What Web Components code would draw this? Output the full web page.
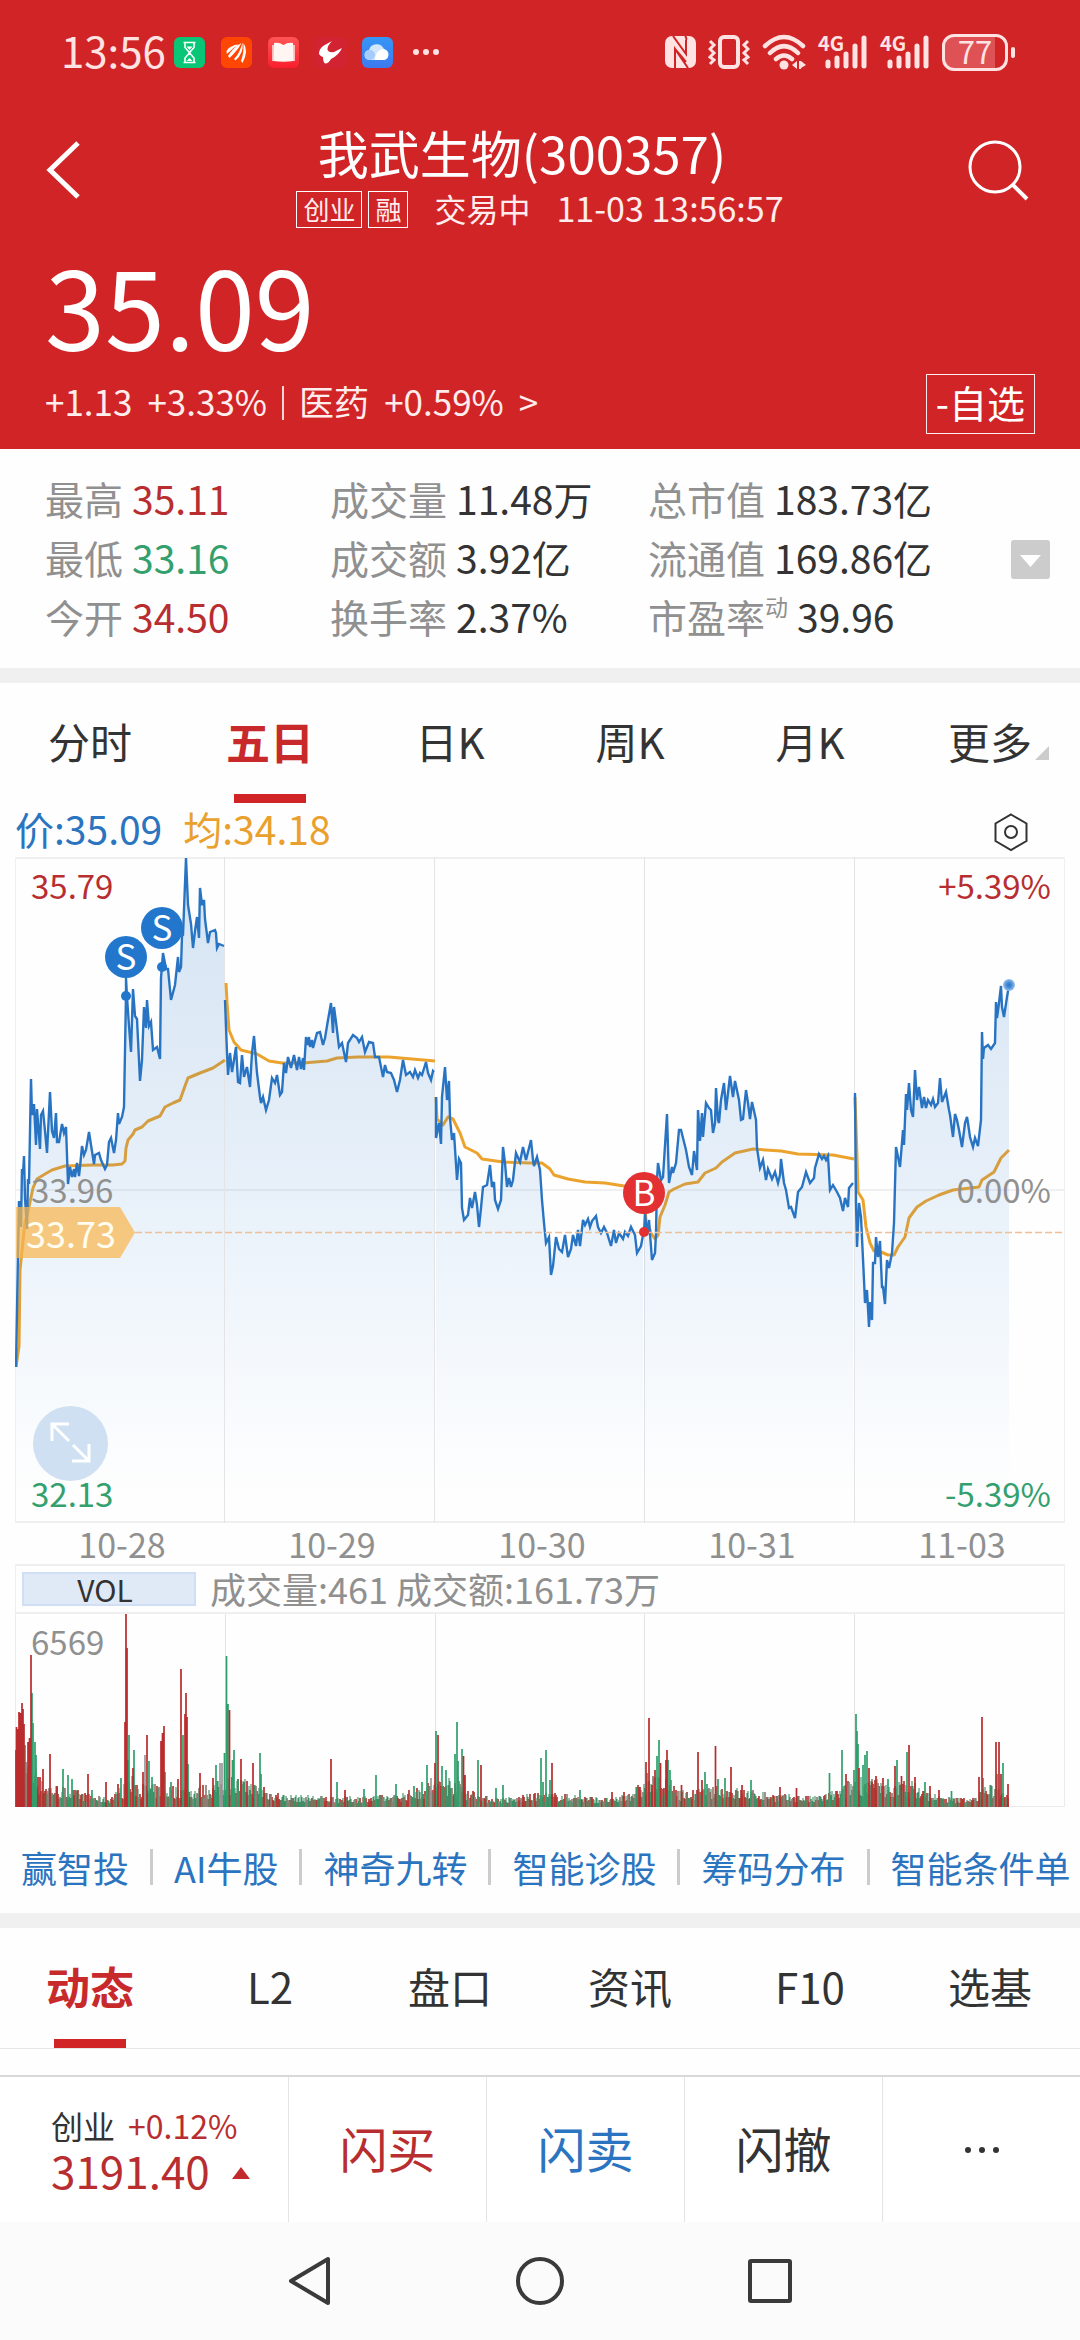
<!DOCTYPE html>
<html lang="zh-CN">
<head>
<meta charset="utf-8">
<meta name="viewport" content="width=device-width, initial-scale=1">
<title>我武生物(300357)</title>
<style>
    :root {
        --up: #b82e30;
        --down: #33a06e;
        --brand: #d12426;
        --blue: #2b74bf;
        --orange: #e9a02c;
        --ink: #333;
        --muted: #909090;
        --line: #efefef;
    }
    * { box-sizing: border-box; }
    body {
        margin: 0;
        min-height: 100vh;
        display: flex;
        flex-direction: column;
        background: #fefefe;
        color: var(--ink);
        font-family: "Noto Sans CJK SC", "Noto Sans", sans-serif;
    }
    header { background: var(--brand); color: #fff; }
    main { flex: 1; }
    .band { height: 15px; background: #f0f0f0; }
    .news-tabs { border-bottom: 1px solid #e6e6e6; }
</style>
</head>
<body>
<header>
    <status-bar time="13:56" battery="77"></status-bar>
    <stock-title name="我武生物(300357)">
        <title-tag>创业</title-tag>
        <title-tag>融</title-tag>
        <span slot="state">交易中</span>
        <time slot="time">11-03 13:56:57</time>
    </stock-title>
    <price-board price="35.09" change="+1.13" percent="+3.33%" sector="医药" sector-percent="+0.59%"></price-board>
</header>
<main>
    <quote-stats>
        <stat-item label="最高" tone="up">35.11</stat-item>
        <stat-item label="成交量">11.48万</stat-item>
        <stat-item label="总市值">183.73亿</stat-item>
        <stat-item label="最低" tone="down">33.16</stat-item>
        <stat-item label="成交额">3.92亿</stat-item>
        <stat-item label="流通值">169.86亿</stat-item>
        <stat-item label="今开" tone="up">34.50</stat-item>
        <stat-item label="换手率">2.37%</stat-item>
        <stat-item label="市盈率" mark="动">39.96</stat-item>
    </quote-stats>
    <div class="band"></div>
    <tab-strip>
        <tab-item>分时</tab-item>
        <tab-item active>五日</tab-item>
        <tab-item>日K</tab-item>
        <tab-item>周K</tab-item>
        <tab-item>月K</tab-item>
        <tab-item more>更多</tab-item>
    </tab-strip>
    <chart-legend price="35.09" average="34.18"></chart-legend>
    <price-chart high="35.79" middle="33.96" low="32.13" range="5.39%" cost="33.73">
        <trade-marker side="S" x="111" y="139"></trade-marker>
        <trade-marker side="S" x="147" y="110"></trade-marker>
        <trade-marker side="B" x="629" y="375"></trade-marker>
    </price-chart>
    <date-axis dates="10-28,10-29,10-30,10-31,11-03"></date-axis>
    <volume-chart peak="6569">成交量:461 成交额:161.73万</volume-chart>
    <tool-links>
        <a href="#invest">赢智投</a>
        <a href="#ai">AI牛股</a>
        <a href="#nine">神奇九转</a>
        <a href="#diagnose">智能诊股</a>
        <a href="#chips">筹码分布</a>
        <a href="#orders">智能条件单</a>
    </tool-links>
    <div class="band"></div>
    <tab-strip class="news-tabs">
        <tab-item active>动态</tab-item>
        <tab-item>L2</tab-item>
        <tab-item>盘口</tab-item>
        <tab-item>资讯</tab-item>
        <tab-item>F10</tab-item>
        <tab-item>选基</tab-item>
    </tab-strip>
</main>
<trade-bar index="创业" percent="+0.12%" value="3191.40"></trade-bar>
<system-nav></system-nav>

<script>
// shared reset for every shadow root
const base = `
    * { box-sizing: border-box; }
    button { font: inherit; color: inherit; background: none; border: 0; padding: 0; margin: 0; cursor: pointer; }
    svg { display: block; }
`;

class StatusBar extends HTMLElement {
    connectedCallback() {
        this.attachShadow({ mode: 'open' });
        const signal = `
            <div class="signal">
                <span>4G</span>
                <svg width="50" height="36" viewBox="0 0 50 36" fill="none" stroke="currentColor" stroke-width="5" stroke-linecap="round">
                    <path d="M10 28v4M19 24v8M28 20v12M37 12v20M46 4v28"/>
                </svg>
            </div>`;
        this.shadowRoot.innerHTML = `
            <style>
                ${base}
                :host {
                    display: flex;
                    align-items: center;
                    height: 104px;
                    padding: 0 72px 0 61px;
                    color: #ffe3e3;
                }
                .time { font-size: 42px; line-height: 54px; margin-right: 8px; padding-bottom: 4px; }
                .apps { display: flex; align-items: center; gap: 16px; flex: 1; }
                .system { display: flex; align-items: center; gap: 12px; }
                .signal { position: relative; }
                .signal span {
                    position: absolute;
                    left: 0;
                    top: -3px;
                    font-size: 20px;
                    font-weight: 700;
                    line-height: 24px;
                }
                .battery {
                    position: relative;
                    width: 66px;
                    height: 37px;
                    border: 3px solid currentColor;
                    border-radius: 12px;
                    background: linear-gradient(to right, #de5154 84%, transparent 84%);
                    font-size: 31px;
                    line-height: 27px;
                    text-align: center;
                }
                .battery::after {
                    content: "";
                    position: absolute;
                    right: -10px;
                    top: 10px;
                    width: 4px;
                    height: 11px;
                    border-radius: 2px;
                    background: currentColor;
                }
            </style>
            <span class="time">${this.getAttribute('time')}</span>
            <div class="apps">
                <svg width="31" height="31" viewBox="0 0 31 31" fill="none" stroke="#fff" stroke-width="1.6">
                    <rect width="31" height="31" rx="6" fill="#08c676" stroke="none"/>
                    <path d="M9.5 5.5h12M9.5 25.5h12M11 6v4.5l4 4.5v1.5l-4 4.5v4.5M20 6v4.5l-4 4.5v1.5l4 4.5v4.5"/>
                    <path d="M12.5 9.5h6l-3 3.5zM12.5 24l3-3 3 3z" fill="#fff" stroke="none"/>
                </svg>
                <svg width="31" height="31" viewBox="0 0 31 31" fill="#fff">
                    <rect width="31" height="31" rx="6" fill="#ff4703"/>
                    <path d="M5.5 14Q9 8 18 7.5Q12 10.5 5.8 17z"/>
                    <path d="M7 19Q12 10.5 20.5 6Q17 13 8.5 21z"/>
                    <path d="M13 22Q19 16 21.5 5.5Q23 16 14.5 23.5z"/>
                    <path d="M20 24Q23 16 22.5 6Q28 14 21.5 26z"/>
                </svg>
                <svg width="31" height="31" viewBox="0 0 31 31">
                    <linearGradient id="book" x2="0" y2="1"><stop stop-color="#ff5556"/><stop offset="1" stop-color="#f91f2d"/></linearGradient>
                    <rect width="31" height="31" rx="6" fill="url(#book)"/>
                    <path d="M4 8h23v16H4z" fill="#ffb9b7"/>
                    <path d="M6 6q5-1 9.5 2Q20 5 25 6l.5 18q-10 1.5-20 0z" fill="#fff6f4"/>
                </svg>
                <svg width="31" height="31" viewBox="0 0 31 31">
                    <rect width="31" height="31" rx="6" fill="#d12332"/>
                    <path d="M17 4L8 9Q4 12 4 17Q6 20 8 20Q8 25 10 26.5Q13 27 16 22Q24 18 27 11L19 15Q14 16 12.5 13Q12 9 17 4z" fill="#fff"/>
                </svg>
                <svg width="31" height="31" viewBox="0 0 31 31">
                    <linearGradient id="sky" x2="0" y2="1"><stop stop-color="#3597f6"/><stop offset="1" stop-color="#3d79ef"/></linearGradient>
                    <rect width="31" height="31" rx="6" fill="url(#sky)"/>
                    <path d="M8 23a5 5 0 0 1-1-10a8 8 0 0 1 15-1a6 6 0 0 1 0 11z" fill="#d2e6fc"/>
                    <path d="M13 23Q13 16 18 13Q21 11 24 13a5.5 5.5 0 0 1-2 10z" fill="#fff"/>
                    <circle cx="8" cy="18" r="5" fill="#a5ccfa"/>
                </svg>
                <svg width="36" height="31" viewBox="0 0 36 31" fill="currentColor">
                    <circle cx="7" cy="15" r="3"/><circle cx="17" cy="15" r="3"/><circle cx="27" cy="15" r="3"/>
                </svg>
            </div>
            <div class="system">
                <svg width="31" height="32" viewBox="0 0 31 32">
                    <rect width="31" height="32" rx="7" fill="currentColor"/>
                    <path d="M8 0L21 18V4M21 4Q22 2 20 0M10 32V13L23 32M10 13L21 26" fill="none" stroke="#d12426" stroke-width="2"/>
                </svg>
                <svg width="42" height="34" viewBox="0 0 42 34" fill="none" stroke="currentColor" stroke-width="3">
                    <rect x="12" y="2" width="18" height="30" rx="4" stroke-width="4"/>
                    <path d="M2 6l4 4-4 4 4 4-4 4 4 3-4 4M40 6l-4 4 4 4-4 4 4 4-4 3 4 4"/>
                </svg>
                <svg width="44" height="36" viewBox="0 0 44 36" fill="none" stroke="currentColor" stroke-width="4.5" stroke-linecap="round">
                    <path d="M3 12Q22-6 41 12M8 19Q22 5 36 19M14 25Q22 18 30 25"/>
                    <circle cx="22" cy="31" r="4.5" fill="currentColor" stroke="none"/>
                    <path d="M30 31l5-4v8zM37 27h2v8h-2zM39 27l5 4-5 3z" fill="currentColor" stroke="none"/>
                </svg>
                ${signal}
                ${signal}
                <div class="battery">${this.getAttribute('battery')}</div>
            </div>
        `;
    }
}

class StockTitle extends HTMLElement {
    connectedCallback() {
        this.attachShadow({ mode: 'open' });
        this.shadowRoot.innerHTML = `
            <style>
                ${base}
                :host {
                    display: grid;
                    grid-template-columns: 120px 1fr 120px;
                    padding-top: 18px;
                }
                h1 {
                    margin: 0;
                    padding-right: 36px;
                    font-size: 51px;
                    font-weight: 400;
                    line-height: 60px;
                    text-align: center;
                    white-space: nowrap;
                }
                .sub {
                    display: flex;
                    justify-content: center;
                    gap: 6px;
                    margin-top: 9px;
                    height: 37px;
                    line-height: 34px;
                    white-space: nowrap;
                    color: #ffecec;
                }
                ::slotted(span) { font-size: 32px; margin: 0 20px; }
                ::slotted(time) { font-size: 34px; }
                .back, .search { align-self: start; height: 96px; }
                .back svg { margin-left: 42px; }
                .search svg { margin-left: 4px; }
            </style>
            <button class="back" aria-label="返回">
                <svg width="42" height="60" viewBox="0 0 42 60" fill="none" stroke="#fff" stroke-width="5"><path d="M36 3L8 30l28 27"/></svg>
            </button>
            <div>
                <h1>${this.getAttribute('name')}</h1>
                <div class="sub"><slot></slot><slot name="state"></slot><slot name="time"></slot></div>
            </div>
            <button class="search" aria-label="搜索">
                <svg width="68" height="64" viewBox="0 0 68 64" fill="none" stroke="#fff" stroke-width="3">
                    <circle cx="31" cy="29" r="25"/><path d="M48 46l15 15" stroke-width="4"/>
                </svg>
            </button>
        `;
    }
}

class TitleTag extends HTMLElement {
    connectedCallback() {
        this.attachShadow({ mode: 'open' });
        this.shadowRoot.innerHTML = `
            <style>
                :host {
                    display: block;
                    padding: 0 6px;
                    border: 1px solid #fff;
                    font-size: 26px;
                    line-height: 34px;
                }
            </style>
            <slot></slot>
        `;
    }
}

class PriceBoard extends HTMLElement {
    connectedCallback() {
        this.attachShadow({ mode: 'open' });
        this.shadowRoot.innerHTML = `
            <style>
                ${base}
                :host { display: block; padding: 20px 45px 15px; }
                .price { font-size: 108px; line-height: 112px; }
                .row { display: flex; justify-content: space-between; margin-top: 14px; }
                .change {
                    display: flex;
                    align-items: center;
                    gap: 15px;
                    height: 54px;
                    font-size: 35px;
                    line-height: 54px;
                    white-space: nowrap;
                    color: #ffecec;
                }
                .change i { width: 2px; height: 34px; margin-top: 4px; background: #ffd5d5; }
                .change a { display: flex; gap: 15px; color: inherit; text-decoration: none; }
                .watch {
                    height: 60px;
                    padding: 0 9px 4px;
                    border: 1px solid #ffecec;
                    font-size: 38px;
                    line-height: 54px;
                    white-space: nowrap;
                }
            </style>
            <div class="price">${this.getAttribute('price')}</div>
            <div class="row">
                <div class="change">
                    <span>${this.getAttribute('change')}</span>
                    <span>${this.getAttribute('percent')}</span>
                    <i></i>
                    <a href="#sector">
                        <span>${this.getAttribute('sector')}</span>
                        <span>${this.getAttribute('sector-percent')}</span>
                        <span>&gt;</span>
                    </a>
                </div>
                <button class="watch">-自选</button>
            </div>
        `;
    }
}

class QuoteStats extends HTMLElement {
    connectedCallback() {
        this.attachShadow({ mode: 'open' });
        this.shadowRoot.innerHTML = `
            <style>
                ${base}
                :host {
                    display: grid;
                    grid-template-columns: 966fr 69fr;
                    align-items: center;
                    padding: 22px 0 20px 45px;
                }
                .items {
                    display: grid;
                    grid-template-columns: 285fr 318fr 363fr;
                    grid-auto-rows: 59px;
                }
                button { width: 39px; height: 39px; border-radius: 3px; background: #ccc; }
            </style>
            <div class="items"><slot></slot></div>
            <button aria-label="展开">
                <svg width="39" height="39" viewBox="0 0 39 39" fill="#fff"><path d="M9 15h21L19.5 27z"/></svg>
            </button>
        `;
    }
}

class StatItem extends HTMLElement {
    connectedCallback() {
        this.attachShadow({ mode: 'open' });
        const tone = this.getAttribute('tone');
        const mark = this.getAttribute('mark');
        this.shadowRoot.innerHTML = `
            <style>
                :host {
                    display: flex;
                    gap: 9px;
                    font-size: 39px;
                    line-height: 55px;
                    white-space: nowrap;
                }
                .label { display: flex; color: var(--muted); }
                small { font-size: 23px; line-height: 34px; }
                .value { color: ${tone ? `var(--${tone})` : 'var(--ink)'}; }
            </style>
            <span class="label">${this.getAttribute('label')}${mark ? `<small>${mark}</small>` : ''}</span>
            <span class="value"><slot></slot></span>
        `;
    }
}

class TabStrip extends HTMLElement {
    connectedCallback() {
        this.attachShadow({ mode: 'open' });
        this.shadowRoot.innerHTML = `
            <style>
                :host { display: flex; }
                ::slotted(*) { flex: 1; }
            </style>
            <slot></slot>
        `;
    }
}

class TabItem extends HTMLElement {
    connectedCallback() {
        this.attachShadow({ mode: 'open' });
        this.shadowRoot.innerHTML = `
            <style>
                ${base}
                :host { display: block; }
                button {
                    width: 100%;
                    height: 120px;
                    padding-bottom: 4px;
                    font-size: 42px;
                    line-height: 60px;
                }
                :host([active]) button {
                    color: #c82a2c;
                    font-size: 44px;
                    font-weight: 700;
                    background: linear-gradient(var(--brand), var(--brand)) center bottom / 72px 9px no-repeat;
                }
                span { position: relative; }
                :host([more]) span::after {
                    content: "";
                    position: absolute;
                    right: -17px;
                    bottom: 11px;
                    border: 7px solid #ccc;
                    border-top-color: transparent;
                    border-left-color: transparent;
                }
            </style>
            <button><span><slot></slot></span></button>
        `;
    }
}

class ChartLegend extends HTMLElement {
    connectedCallback() {
        this.attachShadow({ mode: 'open' });
        this.shadowRoot.innerHTML = `
            <style>
                ${base}
                :host {
                    display: flex;
                    gap: 21px;
                    height: 54px;
                    padding: 0 47px 0 15px;
                    font-size: 39px;
                    line-height: 50px;
                }
                .price { color: var(--blue); }
                .average { color: var(--orange); flex: 1; }
            </style>
            <span class="price">价:${this.getAttribute('price')}</span>
            <span class="average">均:${this.getAttribute('average')}</span>
            <button aria-label="设置">
                <svg width="44" height="54" viewBox="0 0 44 54" fill="none" stroke="#333" stroke-width="2">
                    <path d="M22 11.5l15.5 9v17.5L22 47 6.5 38V20.5z"/><circle cx="22" cy="29" r="6"/>
                </svg>
            </button>
        `;
    }
}

// one list per trading day, x and y on a 1050 x 666 plot
const priceDays = [
    '1,510 3,396 4,344 6,370 7,312 8,317 9,299 10,341 12,372 13,322 14,327 16,222 17,258 19,247 21,288 22,252 25,292 26,258 28,254 30,274 32,296 35,235 37,274 39,281 41,256 42,285 44,285 47,267 49,276 51,270 53,327 55,310 57,320 59,312 60,320 62,306 64,319 65,310 67,289 69,298 71,293 74,275 76,288 79,307 80,298 84,296 86,303 90,312 92,308 94,285 96,281 99,296 101,283 103,256 104,267 107,260 109,250 111,138 111,121 112,140 114,169 116,195 118,132 120,159 122,162 125,224 127,203 129,150 131,171 132,143 134,169 136,165 138,193 142,190 145,202 146,121 148,96 151,112 153,112 156,143 160,128 163,100 164,115 166,110 167,79 168,78 171,1 173,48 176,67 178,91 180,74 182,60 184,81 185,31 187,48 189,43 190,62 193,86 195,75 200,73 201,76 202,91 204,87 209,89',
    '210,143 212,196 213,218 215,196 217,215 219,203 221,190 223,225 225,226 227,198 229,220 232,210 235,230 237,196 239,179 242,216 245,240 246,246 248,240 251,253 254,243 257,221 260,226 262,218 265,238 267,235 269,206 271,216 273,200 276,211 279,198 282,213 284,200 286,212 288,201 289,213 291,180 293,188 294,180 295,190 297,183 298,191 302,176 305,175 308,188 310,181 313,163 316,146 318,176 319,150 321,165 324,190 327,186 331,205 333,186 338,178 342,181 344,185 347,180 350,195 354,185 358,186 360,200 364,200 366,210 368,220 370,208 372,215 376,216 379,223 382,235 385,223 388,203 391,218 395,215 398,220 400,213 403,221 405,216 407,218 411,205 413,216 416,223 418,214 419,215',
    '421,240 421,281 424,266 426,287 427,240 430,210 432,243 434,224 435,261 437,283 439,276 442,323 444,302 446,306 447,351 449,363 453,358 455,341 457,351 460,335 462,348 464,370 466,351 468,330 472,328 475,308 477,330 479,325 480,343 483,352 486,343 488,290 490,306 492,330 494,321 496,330 498,323 501,296 505,305 508,290 511,303 516,283 518,303 519,309 522,300 525,313 527,343 529,366 531,386 534,380 536,418 538,409 541,380 544,392 547,395 550,378 553,400 556,392 558,378 561,389 563,373 565,389 568,363 570,368 573,362 575,370 577,364 581,359 583,370 586,376 589,370 592,376 596,389 599,373 601,386 604,376 608,382 610,375 613,379 616,370 620,378 622,396 626,389 628,378',
    '629,375 630,356 632,378 634,363 637,403 640,396 641,376 642,323 643,306 646,323 648,320 652,257 654,326 657,310 658,316 661,306 664,273 666,273 671,293 674,310 677,318 679,294 682,313 683,253 685,284 687,256 688,280 691,246 694,251 696,253 698,276 700,266 701,231 703,263 704,266 706,243 709,226 711,253 715,219 718,240 720,224 724,243 726,263 728,262 731,233 733,246 735,262 737,245 741,263 742,291 745,311 748,303 751,323 753,312 757,322 760,315 763,326 765,318 766,302 769,326 771,333 774,351 776,350 780,361 783,335 787,330 791,315 795,326 799,321 800,311 804,297 807,302 809,299 811,303 813,299 815,333 818,328 822,335 825,341 828,354 830,341 833,350 834,331 838,326',
    '840,236 841,346 842,390 844,346 846,360 849,423 850,446 852,433 854,470 855,445 857,463 858,406 860,406 861,380 863,400 865,384 867,430 868,430 870,447 872,403 874,411 877,396 879,366 881,290 885,310 888,273 889,288 891,237 892,253 894,226 896,253 898,260 900,213 902,243 904,230 907,251 909,240 911,251 913,243 916,248 918,242 920,250 923,246 925,221 927,245 931,235 934,253 935,258 938,280 940,257 942,263 944,273 947,290 950,266 952,260 953,266 955,280 958,290 960,281 963,289 966,263 967,175 968,202 969,191 973,188 976,192 980,186 981,145 982,161 984,146 986,129 987,150 989,160 992,140 994,128',
];
const averageDays = [
    '1,510 4,489 5,413 8,384 10,365 13,355 15,345 18,331 22,322 30,317 37,313 50,309 78,308 98,308 107,307 110,304 111,291 113,283 118,277 120,273 127,270 133,264 145,259 150,250 158,246 165,243 170,229 173,221 185,216 198,211 210,203',
    '211,126 212,145 214,173 219,185 226,193 242,197 254,204 267,206 288,206 312,204 322,201 343,200 374,200 420,204',
    '421,240 422,262 428,268 433,260 438,262 442,270 445,276 450,290 462,296 467,302 488,305 515,306 527,306 535,312 539,318 553,322 570,325 590,326 609,329 618,330 628,331',
    '630,345 631,365 634,370 636,376 640,382 643,378 645,360 650,348 654,335 659,332 670,327 683,325 690,316 701,311 707,305 720,296 738,292 766,294 783,297 818,298 839,302',
    '840,240 842,300 843,335 848,343 851,370 855,386 859,394 866,395 873,398 879,398 883,390 890,380 894,361 902,350 911,344 924,338 938,333 964,330 967,323 979,315 986,301 994,293',
];

class PriceChart extends HTMLElement {
    connectedCallback() {
        this.attachShadow({ mode: 'open' });
        const range = this.getAttribute('range');
        const line = day => `<polyline points="${day}"/>`;
        const area = day => {
            const xs = day.split(' ').map(p => p.split(',')[0]);
            return `<polygon points="${xs[0]},666 ${day} ${xs[xs.length - 1]},666"/>`;
        };
        this.shadowRoot.innerHTML = `
            <style>
                ${base}
                :host {
                    display: block;
                    position: relative;
                    height: 666px;
                    margin: 0 15px;
                    font-size: 33px;
                    line-height: 40px;
                }
                .plot { width: 100%; height: 100%; }
                .label { position: absolute; color: var(--muted); }
                .left { left: 16px; }
                .right { right: 14px; }
                .top { top: 8px; color: var(--up); }
                .middle { top: 312px; }
                .bottom { bottom: 10px; color: var(--down); }
                .cost {
                    position: absolute;
                    left: 1px;
                    top: 350px;
                    width: 119px;
                    padding-left: 10px;
                    font-size: 36px;
                    line-height: 51px;
                    color: #fffdf0;
                    background: rgba(249, 181, 77, .72);
                    clip-path: polygon(0 0, 104px 0, 100% 50%, 104px 100%, 0 100%);
                }
                .expand {
                    position: absolute;
                    left: 18px;
                    top: 549px;
                    width: 75px;
                    height: 75px;
                    border-radius: 50%;
                    background: #cfe0f2;
                }
            </style>
            <svg class="plot" viewBox="0 0 1050 666" preserveAspectRatio="none" fill="none">
                <linearGradient id="shade" gradientUnits="userSpaceOnUse" x1="0" y1="0" x2="0" y2="640">
                    <stop stop-color="#2b74bf" stop-opacity=".2"/>
                    <stop offset=".5" stop-color="#2b7cd0" stop-opacity=".11"/>
                    <stop offset="1" stop-color="#2b8ae0" stop-opacity="0"/>
                </linearGradient>
                <radialGradient id="dot"><stop stop-color="#2277cc"/><stop offset=".5" stop-color="#5090d8"/><stop offset="1" stop-color="#9cc4ee"/></radialGradient>
                <g stroke="#f0f0f0" stroke-width="2"><path d="M0 1h1050M0 665h1050M0 333h1050"/><path d="M.5 0v666M1049.5 0v666" stroke-width="1"/></g>
                <path d="M209.5 0v666M419.5 0v666M629.5 0v666M839.5 0v666" stroke="#e4e4e6"/>
                <g stroke="#eca32d" stroke-width="3" stroke-linejoin="round">${averageDays.map(line).join('')}</g>
                <g fill="url(#shade)">${priceDays.map(area).join('')}</g>
                <g stroke="#2874c3" stroke-width="2.4">${priceDays.map(line).join('')}</g>
                <path d="M120 375.5h930" stroke="#eebf98" stroke-width="1.5" stroke-dasharray="7 3"/>
                <circle cx="994" cy="128" r="6" fill="url(#dot)"/>
            </svg>
            <span class="label left top">${this.getAttribute('high')}</span>
            <span class="label right top">+${range}</span>
            <span class="label left middle">${this.getAttribute('middle')}</span>
            <span class="label right middle">0.00%</span>
            <span class="cost">${this.getAttribute('cost')}</span>
            <button class="expand" aria-label="全屏">
                <svg width="75" height="75" viewBox="0 0 75 75" fill="none" stroke="#fff" stroke-width="3">
                    <path d="M19 35V18h17M19 18l17 17M56 38v17H39M56 55L40 39"/>
                </svg>
            </button>
            <span class="label left bottom">${this.getAttribute('low')}</span>
            <span class="label right bottom">-${range}</span>
            <slot></slot>
        `;
    }
}

// pin over the price line, x and y are the traded point on the plot
class TradeMarker extends HTMLElement {
    connectedCallback() {
        this.attachShadow({ mode: 'open' });
        const side = this.getAttribute('side');
        this.shadowRoot.innerHTML = `
            <style>
                :host {
                    position: absolute;
                    left: ${this.getAttribute('x') / 1050 * 100}%;
                    top: ${this.getAttribute('y') / 666 * 100}%;
                    width: 42px;
                    margin: -60px 0 0 -21px;
                    --pin: ${side === 'B' ? '#e23033' : '#2277cc'};
                }
                b {
                    display: block;
                    height: 42px;
                    border-radius: 50%;
                    background: var(--pin);
                    color: #fff;
                    font-size: 35px;
                    font-weight: 400;
                    line-height: 38px;
                    text-align: center;
                }
                i {
                    display: block;
                    width: 10px;
                    height: 10px;
                    margin: 13px auto 0;
                    border-radius: 50%;
                    background: var(--pin);
                }
            </style>
            <b>${side}</b><i></i>
        `;
    }
}

class DateAxis extends HTMLElement {
    connectedCallback() {
        this.attachShadow({ mode: 'open' });
        const dates = this.getAttribute('dates').split(',');
        this.shadowRoot.innerHTML = `
            <style>
                :host {
                    display: flex;
                    height: 41px;
                    margin: 0 13px 0 17px;
                    font-size: 34px;
                    line-height: 42px;
                    color: var(--muted);
                }
                span { flex: 1; text-align: center; }
            </style>
            ${dates.map(d => `<span>${d}</span>`).join('')}
        `;
    }
}

// tall bars: x, height, r/g/n (rise, fall, flat)
const volumePeaks = '1.5,80,r 3,78,r 4,95,r 5.5,94,r 7,104,r 8,98,r 9,83,r 10,62,g 13,65,r 14.5,69,r 16,152,r 17,114,g 18,84,g 20,65,g 21,52,g 23,30,r 25,30,r 28,38,r 35,53,r 42,21,r 48,38,g 53,32,g 57,28,g 73,33,r 77,17,g 91,25,r 103,23,r 106,29,g 110,85,r 111,193,r 112,159,r 113,47,g 114,72,g 118,39,r 119,57,g 128,35,r 130,52,n 132,72,r 134,46,g 137,30,g 146,66,r 147.5,74,r 149,81,r 150,35,g 156,25,g 163,28,r 166,138,r 168,72,g 170,93,r 171,114,r 172,90,r 173,43,g 185,34,r 198,29,r 201,42,g 205,44,n 207,44,n 209.5,54,g 211.5,151,g 213,103,g 214.5,97,r 217.5,47,g 219,57,g 223,28,g 226,48,r 232,26,r 238,44,r 245,54,g 246,33,g 249,20,r 316,48,r 322,25,g 330,17,r 349,18,g 361,32,g 381,23,g 399,21,g 407,25,g 412,42,g 416,29,n 420,44,r 421,76,g 423,72,r 427,41,g 431,37,g 440,53,g 442,85,g 443,46,g 447,58,g 448.5,51,r 450,32,r 463,47,g 466,42,r 481,19,g 488,22,g 508,12,r 526,49,g 528,25,g 531,57,g 535,27,g 537,44,r 565,17,g 597,15,r 609,15,r 625,20,r 631,45,r 632,34,g 634,89,r 637,22,r 640,37,r 642,51,g 644,67,g 645.5,44,r 651,47,r 652,57,r 653,47,g 655,37,g 666.5,22,r 683,55,r 687,27,r 690,35,g 692,23,g 700.5,61,r 703,28,g 710,29,g 716,40,r 727,22,r 736,27,g 765,20,r 781.5,19,r 814.5,34,g 827,57,g 831,33,r 839,37,g 841,93,g 842,76,g 843,63,g 844,39,r 848,42,g 850,52,g 852,56,g 854,39,r 857,25,r 861,31,r 868,29,r 873,28,g 880,41,r 882,47,g 886.5,31,r 892,55,g 894,62,r 900,30,r 910,25,g 915,21,r 924,17,r 936.5,16,g 964,30,r 967,90,r 968,29,g 981,65,r 982,33,g 984,65,r 986,33,r 988,44,g 993,23,r'
    .split(' ').map(p => p.split(','));
// ceiling of the ordinary minutes: x, height
const volumeFloor = [[0, 60], [20, 44], [24, 28], [40, 22], [60, 17], [80, 11], [95, 9], [108, 22], [118, 32], [125, 24], [140, 22], [180, 20], [205, 26], [215, 32], [235, 26], [250, 18], [270, 12], [330, 10], [380, 12], [400, 18], [420, 28], [440, 32], [455, 18], [470, 10], [500, 9], [522, 14], [545, 13], [600, 8], [620, 20], [640, 32], [656, 26], [670, 15], [700, 20], [730, 18], [760, 13], [800, 10], [825, 18], [840, 32], [858, 30], [870, 22], [895, 28], [912, 15], [930, 9], [962, 9], [968, 22], [995, 20]];

class VolumeChart extends HTMLElement {
    bars() {
        const low = { r: '', g: '', n: '' };
        const tall = { r: '', g: '', n: '' };
        let seed = 7;
        const random = () => (seed = seed * 16807 % 2147483647) / 2147483647;
        for (let x = 1; x < 994; x += 1) {
            const i = volumeFloor.findIndex(p => p[0] > x);
            const [x0, h0] = volumeFloor[i - 1];
            const [x1, h1] = volumeFloor[i];
            const top = h0 + (h1 - h0) * (x - x0) / (x1 - x0);
            const pick = random();
            const h = Math.round(top * (.3 + .7 * random()) + 1);
            low[pick < .42 ? 'r' : pick < .86 ? 'g' : 'n'] += `M${x} 193v-${h}`;
        }
        volumePeaks.forEach(([x, h, side]) => tall[side] += `M${x} 193v-${h}`);
        return `
            <path d="${low.r}" stroke="#b03a34"/>
            <path d="${low.n}" stroke="#8f8078"/>
            <path d="${low.g}" stroke="#3f8e66" stroke-width="1.1"/>
            <path d="${tall.n}" stroke="#999"/>
            <path d="${tall.g}" stroke="#2f9f6b"/>
            <path d="${tall.r}" stroke="#b92b2c"/>
        `;
    }

    connectedCallback() {
        this.attachShadow({ mode: 'open' });
        this.shadowRoot.innerHTML = `
            <style>
                ${base}
                :host { display: block; margin: 0 15px; color: var(--muted); }
                .head {
                    display: flex;
                    align-items: center;
                    gap: 14px;
                    height: 50px;
                    padding-left: 6px;
                    border: 1px solid var(--line);
                    border-width: 2px 1px;
                    font-size: 36px;
                    line-height: 42px;
                    white-space: nowrap;
                }
                .head span { padding-bottom: 3px; }
                button {
                    width: 174px;
                    height: 34px;
                    padding-right: 8px;
                    border: 2px solid #d1dff4;
                    background: #e0eaf7;
                    color: var(--ink);
                    font-size: 30px;
                    line-height: 28px;
                }
                .body { position: relative; height: 193px; }
                .plot { width: 100%; height: 100%; }
                .peak { position: absolute; left: 16px; top: 7px; font-size: 33px; line-height: 40px; }
            </style>
            <div class="head"><button>VOL</button><span><slot></slot></span></div>
            <div class="body">
                <svg class="plot" viewBox="0 0 1050 193" preserveAspectRatio="none" fill="none" stroke-width="1.7">
                    <path d="M.5 0v192.5h1049V0" stroke="#ebebeb" stroke-width="1"/>
                    <path d="M210.5 0v193M420.5 0v193M629.5 0v193M839.5 0v193" stroke="#e4e4e6" stroke-width="1"/>
                    ${this.bars()}
                </svg>
                <span class="peak">${this.getAttribute('peak')}</span>
            </div>
        `;
    }
}

class ToolLinks extends HTMLElement {
    connectedCallback() {
        this.attachShadow({ mode: 'open' });
        this.shadowRoot.innerHTML = `
            <style>
                :host {
                    display: flex;
                    align-items: center;
                    height: 106px;
                    padding-top: 14px;
                    font-size: 36px;
                    line-height: 36px;
                    white-space: nowrap;
                }
                ::slotted(a) {
                    padding: 0 21px;
                    border-right: 3px solid #ccc;
                    color: var(--blue);
                    text-decoration: none;
                }
                ::slotted(a:last-child) { border: 0; padding-right: 0; }
            </style>
            <slot></slot>
        `;
    }
}

class TradeBar extends HTMLElement {
    connectedCallback() {
        this.attachShadow({ mode: 'open' });
        this.shadowRoot.innerHTML = `
            <style>
                ${base}
                :host {
                    display: grid;
                    grid-template-columns: 288fr repeat(4, 198fr);
                    height: 147px;
                    border-top: 2px solid #d6d9d8;
                    background: #fff;
                }
                button { padding-bottom: 6px; border-left: 1px solid #e4e4e4; font-size: 48px; line-height: 60px; }
                .index { padding: 0 0 3px 51px; border: 0; text-align: left; white-space: nowrap; }
                .row { display: flex; align-items: center; line-height: 45px; color: var(--up); }
                .name { gap: 13px; font-size: 32px; }
                .name b { font-weight: 400; color: var(--ink); }
                .value { gap: 22px; font-size: 44px; }
                .value svg { margin-top: 4px; }
                .buy { color: var(--up); }
                .sell { color: var(--blue); }
                .more { padding: 0; }
                .more svg { margin: auto; }
            </style>
            <button class="index">
                <span class="row name"><b>${this.getAttribute('index')}</b>${this.getAttribute('percent')}</span>
                <span class="row value">${this.getAttribute('value')}
                    <svg width="18" height="12" viewBox="0 0 18 12" fill="#c22a2c"><path d="M9 0l9 12H0z"/></svg>
                </span>
            </button>
            <button class="buy">闪买</button>
            <button class="sell">闪卖</button>
            <button>闪撤</button>
            <button class="more" aria-label="更多">
                <svg width="40" height="8" viewBox="0 0 40 8" fill="#333">
                    <circle cx="6" cy="4" r="3"/><circle cx="20" cy="4" r="3"/><circle cx="34" cy="4" r="3"/>
                </svg>
            </button>
        `;
    }
}

class SystemNav extends HTMLElement {
    connectedCallback() {
        this.attachShadow({ mode: 'open' });
        this.shadowRoot.innerHTML = `
            <style>
                ${base}
                :host {
                    display: flex;
                    justify-content: center;
                    height: 118px;
                    background: #fbfbfb;
                }
                button { width: 230px; }
                svg { margin: auto; }
            </style>
            <button aria-label="返回"><svg width="50" height="50" viewBox="0 0 50 50" fill="none" stroke="#3a3a3a" stroke-width="4" stroke-linejoin="round"><path d="M43 3v44L6 25z"/></svg></button>
            <button aria-label="主页"><svg width="50" height="50" viewBox="0 0 50 50" fill="none" stroke="#3a3a3a" stroke-width="4"><circle cx="25" cy="25" r="22"/></svg></button>
            <button aria-label="最近任务"><svg width="50" height="50" viewBox="0 0 50 50" fill="none" stroke="#3a3a3a" stroke-width="4"><rect x="5" y="5" width="40" height="40" rx="1"/></svg></button>
        `;
    }
}

customElements.define('status-bar', StatusBar);
customElements.define('stock-title', StockTitle);
customElements.define('title-tag', TitleTag);
customElements.define('price-board', PriceBoard);
customElements.define('quote-stats', QuoteStats);
customElements.define('stat-item', StatItem);
customElements.define('tab-strip', TabStrip);
customElements.define('tab-item', TabItem);
customElements.define('chart-legend', ChartLegend);
customElements.define('price-chart', PriceChart);
customElements.define('trade-marker', TradeMarker);
customElements.define('date-axis', DateAxis);
customElements.define('volume-chart', VolumeChart);
customElements.define('tool-links', ToolLinks);
customElements.define('trade-bar', TradeBar);
customElements.define('system-nav', SystemNav);
</script>
</body>
</html>
